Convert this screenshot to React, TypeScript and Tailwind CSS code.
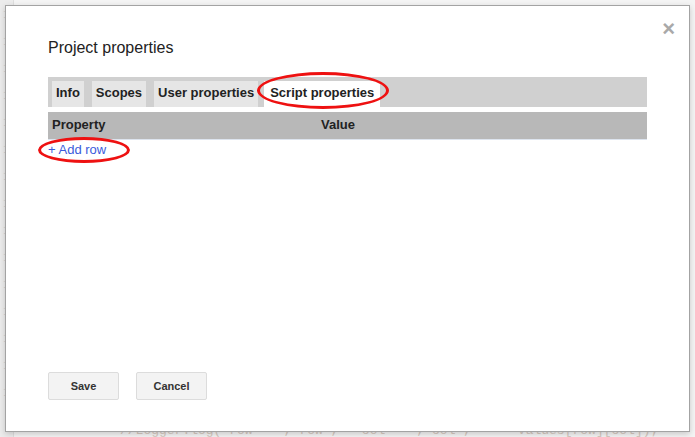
import React from "react";

const tabs = ["Info", "Scopes", "User properties"];

export default function App() {
    return (
        <div className="relative w-[695px] h-[437px] overflow-hidden bg-[#f4f4f4] font-['Liberation_Sans',Arial,sans-serif]">
            {/* faded editor behind the dialog */}
            <div className="absolute inset-0 flex">
                <div className="w-[14px] h-full bg-[#ececec] border-r border-[#dedede] flex flex-col gap-[14px] pt-[8px] pl-[3px] text-[13px] leading-[13px] text-[#d4d4d4] font-['Liberation_Mono',monospace]">
                    {Array.from({ length: 15 }).map((_, i) => (
                        <span key={i}>1</span>
                    ))}
                </div>
                <div className="flex-1 relative">
                    <div className="absolute left-[106px] top-[424px] text-[13px] leading-[13px] text-[#d6c9c0] font-['Liberation_Mono',monospace] whitespace-pre">
                        {"//Logger.log( row    , row ,   col    , col ,      values[row][col]);"}
                    </div>
                </div>
            </div>

            {/* dialog */}
            <div className="absolute left-[5px] top-[5px] w-[685px] h-[427px] bg-white border border-[#a3a3a3] shadow-[0_2px_6px_rgba(0,0,0,0.18)] flex flex-col">
                <div className="relative flex-1 px-[42px] pt-[32px]">
                    <span className="absolute right-[14px] top-[12px] text-[22px] leading-none text-[#a9a9a9] font-bold">×</span>
                    <div className="text-[16px] leading-[20px] text-[#222]">Project properties</div>

                    <div className="mt-[19px] h-[30px] bg-[#d0d0d0] flex items-end gap-[8px] pl-[4px]">
                        {tabs.map((t) => (
                            <div key={t} className="h-[26px] pb-[2px] px-[4px] bg-[#e6e6e6] flex items-center text-[13px] font-bold text-[#222]">
                                {t}
                            </div>
                        ))}
                        <div className="relative h-[26px] pb-[2px] px-[6px] ml-[-2px] bg-white flex items-center text-[13px] font-bold text-[#222]">
                            Script properties
                            <div className="absolute left-[-7px] top-[-9px] w-[132px] h-[37px] border-[3px] border-[#ee1111] rounded-[50%]" />
                        </div>
                    </div>

                    <div className="mt-[5px] h-[28px] pb-[2px] bg-[#b8b8b8] border-b border-[#dde4ee] grid grid-cols-[269px_1fr] items-center px-[4px] text-[13px] font-bold text-[#222]">
                        <span>Property</span>
                        <span>Value</span>
                    </div>

                    <div className="relative mt-[2px] w-fit text-[13px] leading-[16px] text-[#3b5bdb]">
                        + Add row
                        <div className="absolute left-[-10px] top-[-5px] w-[92px] h-[26px] border-[3px] border-[#ee1111] rounded-[50%]" />
                    </div>
                </div>

                <div className="flex gap-[17px] px-[42px] pb-[31px]">
                    <button className="w-[71px] h-[28px] bg-[#f3f3f3] border border-[#dcdcdc] rounded-[2px] text-[11px] font-bold text-[#333]">
                        Save
                    </button>
                    <button className="w-[71px] h-[28px] bg-[#f3f3f3] border border-[#dcdcdc] rounded-[2px] text-[11px] font-bold text-[#333]">
                        Cancel
                    </button>
                </div>
            </div>
        </div>
    );
}
